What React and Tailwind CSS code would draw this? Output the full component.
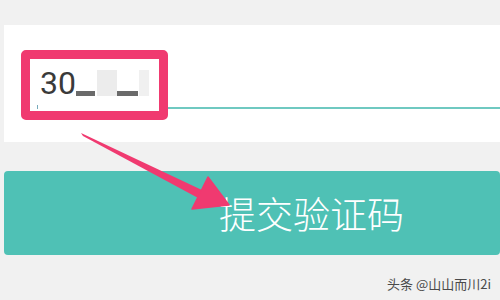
export default function App() {
  return (
    <div className="relative w-[500px] h-[300px] overflow-hidden bg-[#f1f1f1] pt-[25px]" style={{ fontFamily: '"Noto Sans CJK SC", Roboto, sans-serif' }}>
      <div className="ml-[4px] h-[117px] bg-white pt-[82px] pl-[36px]">
        <div className="h-[1.5px] bg-[#6fc9c1]" />
      </div>
      <div className="ml-[4px] mt-[29px] h-[84px] rounded-[4px] bg-[#4fc1b5] flex items-center pl-[215px]">
        <span className="text-white text-[37px] leading-none font-light">提交验证码</span>
      </div>

      {/* annotation box (overlay) */}
      <div className="absolute left-[21px] top-[50px] w-[147px] h-[70px] rounded-[5px] border-[9px] border-[#f03a70] bg-white flex flex-col pl-[7px] pt-[11px]">
        <div className="flex items-end h-[26px] pl-[3px]">
          <span className="text-[32px] leading-[26px] text-[#3a3a3a]" style={{ fontFamily: 'Roboto, sans-serif' }}>30</span>
          <div className="w-[19px] h-[5px] bg-[#6a6a6a]" />
          <div className="w-[20px] h-[26px] bg-[#ececec] ml-[2px]" />
          <div className="w-[21px] h-[5px] bg-[#6a6a6a]" />
          <div className="w-[10px] h-[26px] bg-[#f0f0f0] ml-[1px]" />
        </div>
        <div className="w-[1px] h-[4px] bg-[#7ab] mt-[9px]" />
      </div>

      {/* arrow */}
      <svg className="absolute left-0 top-0" width="500" height="300" viewBox="0 0 500 300">
        <polygon points="81,133 83,136 200,199 204,191" fill="#f03a70" />
        <polygon points="208,177 192,209 229,205" fill="#f03a70" strokeLinejoin="round" stroke="#f03a70" strokeWidth="1.5" />
      </svg>

      <div className="absolute right-[9px] bottom-[7px] text-[13px] leading-[18px] text-[#4a4a4a]">头条 @山山而川2i</div>
    </div>
  );
}
